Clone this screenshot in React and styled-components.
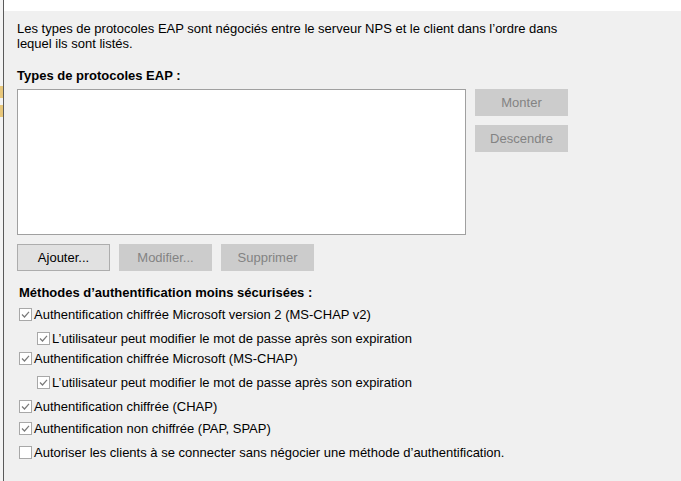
import React from 'react';
import styled, { createGlobalStyle } from 'styled-components';

const GlobalStyle = createGlobalStyle`
    html, body {
        margin: 0;
        padding: 0;
        background: #f0f0f0;
    }
    body {
        font-family: "Liberation Sans", Arial, sans-serif;
        font-size: 13px;
        color: #000;
    }
`;

const Screen = styled.div`
    display: flex;
    width: 681px;
    height: 481px;
    overflow: hidden;
`;

const Sliver = styled.div`
    width: 3px;
    display: flex;
    flex-direction: column;
    background: #f4f4f4;
    border-right: 1px solid #5a5a5a;
`;

const SliverBlock = styled.div`
    height: ${(p) => p.h}px;
    margin-top: ${(p) => p.top}px;
    background: ${(p) => p.color};
`;

const Main = styled.div`
    flex: 1;
    display: flex;
    flex-direction: column;
`;

const TopStrip = styled.div`
    height: 11px;
    background: #ffffff;
`;

const Panel = styled.div`
    flex: 1;
    background: #f0f0f0;
    padding: 10px 0 0 13px;
    display: flex;
    flex-direction: column;
`;

const Intro = styled.p`
    margin: 0;
    line-height: 15px;
    width: 552px;
`;

const Heading = styled.div`
    font-weight: 700;
    margin-top: ${(p) => p.top}px;
    margin-left: ${(p) => p.indent || 0}px;
    line-height: 15px;
`;

const EapRow = styled.div`
    display: flex;
    gap: 9px;
    margin-top: 6px;
`;

const ListBox = styled.div`
    width: 447px;
    height: 144px;
    background: #ffffff;
    border: 1px solid #a0a0a0;
`;

const SideButtons = styled.div`
    display: flex;
    flex-direction: column;
    gap: 9px;
`;

const Button = styled.button`
    width: 93px;
    height: 27px;
    padding: 0;
    font-family: inherit;
    font-size: 13px;
    color: ${(p) => (p.disabled ? '#838383' : '#000')};
    background: ${(p) => (p.disabled ? '#cccccc' : '#e1e1e1')};
    border: 1px solid ${(p) => (p.disabled ? '#cccccc' : '#adadad')};
    border-radius: 0;
`;

const ActionRow = styled.div`
    display: flex;
    gap: 9px;
    margin-top: 9px;
`;

const CheckList = styled.div`
    display: flex;
    flex-direction: column;
    margin-left: 2px;
    margin-top: 4px;
`;

const CheckRow = styled.label`
    display: flex;
    align-items: center;
    gap: 2px;
    height: 20px;
    margin-top: ${(p) => p.top}px;
    margin-left: ${(p) => (p.sub ? 18 : 0)}px;
    white-space: nowrap;
`;

const Box = ({ checked }) => (
    <svg width="13" height="13" viewBox="0 0 13 13">
        <rect x="0.5" y="0.5" width="12" height="12" fill="#ffffff" stroke="#a8a8a8" />
        {checked && (
            <path d="M3 6.5 L5.5 9 L10 3.8" fill="none" stroke="#7a7a7a" strokeWidth="1.2" />
        )}
    </svg>
);

const options = [
    { label: 'Authentification chiffrée Microsoft version 2 (MS-CHAP v2)', checked: true, top: 0 },
    { label: 'L’utilisateur peut modifier le mot de passe après son expiration', checked: true, sub: true, top: 4 },
    { label: 'Authentification chiffrée Microsoft (MS-CHAP)', checked: true, top: 0 },
    { label: 'L’utilisateur peut modifier le mot de passe après son expiration', checked: true, sub: true, top: 4 },
    { label: 'Authentification chiffrée (CHAP)', checked: true, top: 4 },
    { label: 'Authentification non chiffrée (PAP, SPAP)', checked: true, top: 2 },
    { label: 'Autoriser les clients à se connecter sans négocier une méthode d’authentification.', checked: false, top: 4 },
];

export default function App() {
    return (
        <Screen>
            <GlobalStyle />
            <Sliver>
                <SliverBlock top={86} h={12} color="#e8c77a" />
                <SliverBlock top={7} h={12} color="#e8c77a" />
            </Sliver>
            <Main>
                <TopStrip />
                <Panel>
                    <Intro>
                        Les types de protocoles EAP sont négociés entre le serveur NPS et le client dans l’ordre dans
                        lequel ils sont listés.
                    </Intro>
                    <Heading top={17}>Types de protocoles EAP :</Heading>
                    <EapRow>
                        <ListBox />
                        <SideButtons>
                            <Button disabled>Monter</Button>
                            <Button disabled>Descendre</Button>
                        </SideButtons>
                    </EapRow>
                    <ActionRow>
                        <Button>Ajouter...</Button>
                        <Button disabled>Modifier...</Button>
                        <Button disabled>Supprimer</Button>
                    </ActionRow>
                    <Heading top={14} indent={2}>
                        Méthodes d’authentification moins sécurisées :
                    </Heading>
                    <CheckList>
                        {options.map((opt, i) => (
                            <CheckRow key={i} sub={opt.sub} top={opt.top}>
                                <Box checked={opt.checked} />
                                {opt.label}
                            </CheckRow>
                        ))}
                    </CheckList>
                </Panel>
            </Main>
        </Screen>
    );
}
